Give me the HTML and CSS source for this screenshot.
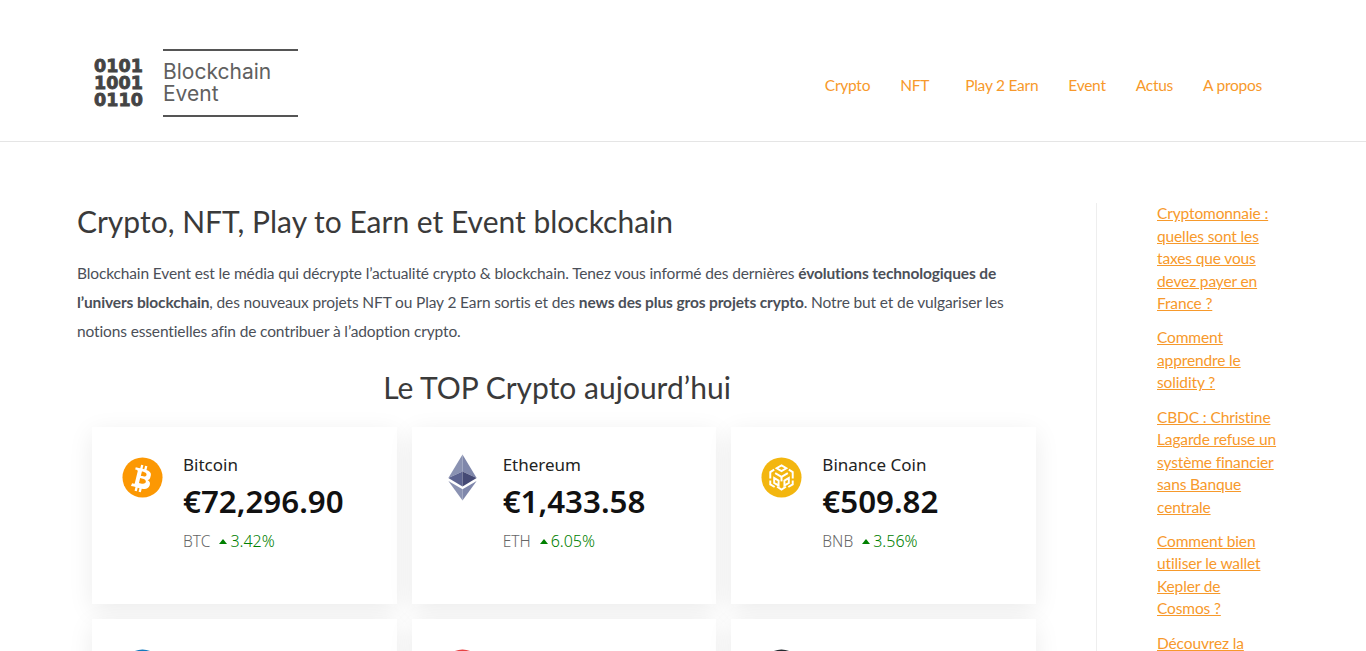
FILE: index.html
```html
<!DOCTYPE html>
<html lang="fr">
<head>
<meta charset="utf-8">
<title>Blockchain Event</title>
<link rel="stylesheet" href="styles.css">
</head>
<body>
<header class="site-header">
  <a class="logo" href="#">
    <span class="logo-bits">0101<br>1001<br>0110</span>
    <span class="logo-name">Blockchain<br>Event</span>
  </a>
  <nav class="nav">
    <a href="#">Crypto</a>
    <a href="#" class="nav-nft">NFT</a>
    <a href="#">Play 2 Earn</a>
    <a href="#">Event</a>
    <a href="#">Actus</a>
    <a href="#">A propos</a>
  </nav>
</header>
<div class="page">
  <main class="main">
    <h1>Crypto, NFT, Play to Earn et Event blockchain</h1>
    <p class="intro">Blockchain Event est le média qui décrypte l’actualité crypto &amp; blockchain. Tenez vous informé des dernières <b>évolutions technologiques de l’univers blockchain</b>, des nouveaux projets NFT ou Play 2 Earn sortis et des <b>news des plus gros projets crypto</b>. Notre but et de vulgariser les notions essentielles afin de contribuer à l’adoption crypto.</p>
    <h2>Le TOP Crypto aujourd’hui</h2>
    <div class="cards">
      <article class="card">
        <svg class="ic" viewBox="0 0 42 42"><circle cx="21" cy="21" r="20.500" fill="#fc9803"/><path fill="#fff" d="M29.600 18.400c.4-2.700-1.700-4.200-4.500-5.200l.9-3.700-2.300-.6-.9 3.600-1.800-.4.900-3.600-2.300-.6-.9 3.700-1.500-.3-3.100-.8-.6 2.400s1.700.4 1.600.4c.9.200 1.100.8 1 1.300l-1 4.100-2 8.100c-.1.300-.5.700-1.100.6 0 0-1.700-.4-1.700-.4l-1.100 2.600 3 .7 1.600.4-.9 3.800 2.300.6.900-3.700 1.800.5-.9 3.700 2.300.6.900-3.800c3.900.7 6.900.4 8.100-3.100 1-2.800 0-4.500-2.100-5.500 1.500-.4 2.600-1.400 2.900-3.300zm-5.200 7.300c-.7 2.800-5.400 1.300-7 .9l1.200-5c1.500.4 6.500 1.100 5.800 4.100zm.7-7.300c-.6 2.500-4.500 1.200-5.800.9l1.100-4.500c1.300.3 5.400.9 4.700 3.600z"/></svg>
        <div class="info">
          <div class="name">Bitcoin</div>
          <div class="price">€72,296.90</div>
          <div class="meta"><span class="sym">BTC</span><span class="chg"><i class="up"></i>3.42%</span></div>
        </div>
      </article>
      <article class="card">
        <svg class="ic" viewBox="0 0 42 48"><path fill="#8a92b2" d="M21 0 6.500 24 21 17.400z"/><path fill="#7f87ab" d="M21 0v17.400L35.500 24z"/><path fill="#5c6390" d="M6.500 24 21 32.600V17.400z"/><path fill="#454a75" d="M21 17.400v15.200L35.500 24z"/><path fill="#8a92b2" d="M6.500 27 21 47V35.500z"/><path fill="#7f87ab" d="M21 35.500V47l14.500-20z"/></svg>
        <div class="info">
          <div class="name">Ethereum</div>
          <div class="price">€1,433.58</div>
          <div class="meta"><span class="sym">ETH</span><span class="chg"><i class="up"></i>6.05%</span></div>
        </div>
      </article>
      <article class="card">
        <svg class="ic" viewBox="0 0 42 42"><circle cx="21" cy="21" r="20.500" fill="#f3b60f"/><g fill="none" stroke="#fff" stroke-width="2"><path d="M21 8.500 26 11.500 21 14.500 16 11.500z"/><path d="M13.500 13 9.500 15.500V22M28.500 13 32.500 15.500V22"/><path d="M14.500 16.500 21 20.300 27.500 16.500"/><path d="M21 20V25"/><path d="M13.500 21.500V26.500L18 29.200V24.200zM28.500 21.500V26.500L24 29.200V24.200z"/><path d="M9.500 24V28L14 30.700M32.500 24V28L28 30.700"/><path d="M16.500 30.500 21 33.300 25.500 30.500"/></g></svg>
        <div class="info">
          <div class="name">Binance Coin</div>
          <div class="price">€509.82</div>
          <div class="meta"><span class="sym">BNB</span><span class="chg"><i class="up"></i>3.56%</span></div>
        </div>
      </article>
      <article class="card">
        <svg class="ic" viewBox="0 0 42 42"><circle cx="21" cy="21" r="20.500" fill="#1279bd"/></svg>
        <div class="info"><div class="name">Litecoin</div></div>
      </article>
      <article class="card">
        <svg class="ic" viewBox="0 0 42 42"><circle cx="21" cy="21" r="20.500" fill="#e84142"/></svg>
        <div class="info"><div class="name">Avalanche</div></div>
      </article>
      <article class="card">
        <svg class="ic" viewBox="0 0 42 42"><circle cx="21" cy="21" r="20.500" fill="#23292f"/></svg>
        <div class="info"><div class="name">XRP</div></div>
      </article>
    </div>
  </main>
  <aside class="side">
    <ul>
      <li><a href="#">Cryptomonnaie : quelles sont les taxes que vous devez payer en France ?</a></li>
      <li><a href="#">Comment apprendre le solidity ?</a></li>
      <li><a href="#">CBDC : Christine Lagarde refuse un système financier sans Banque centrale</a></li>
      <li><a href="#">Comment bien utiliser le wallet Kepler de Cosmos ?</a></li>
      <li><a href="#">Découvrez la</a></li>
    </ul>
  </aside>
</div>
</body>
</html>
```
FILE: styles.css
```css
* { box-sizing: border-box; }
html, body { margin: 0; height: 651px; overflow: hidden; }
body { background: #fff; color: #4b4f58; font-family: "Lato", "Noto Sans", sans-serif; font-size: 15.500px; letter-spacing: -.13px; }
a { color: #f7992b; text-decoration: none; }

.site-header { height: 142px; border-bottom: 1px solid #e5e5e5; display: flex; align-items: flex-start; justify-content: space-between; padding: 49px 104px 0 92px; }
.logo { display: flex; align-items: center; color: #555; letter-spacing: 0; }
.logo-bits { font-family: "DejaVu Sans", sans-serif; font-weight: 700; font-size: 17.500px; line-height: 17px; letter-spacing: .1px; color: #444; width: 71px; padding-left: 2px; -webkit-text-stroke: .8px #444; }
.logo-name { font-family: "Inter", sans-serif; font-weight: 400; font-size: 21px; line-height: 22.500px; width: 135px; height: 68px; padding-top: 9.500px; border-top: 2.500px solid #555; border-bottom: 2.500px solid #555; color: #606060; }

.nav { display: flex; gap: 30px; padding-top: 27px; letter-spacing: -.25px; }
.nav-nft { margin-right: 6px; }

.page { display: flex; padding: 61px 0 0 77px; }
.main { width: 1020px; flex: none; padding-right: 60px; margin-right: -1px; }
h1 { margin: 0; font-weight: 400; font-size: 30px; line-height: 36px; color: #3a3a3a; letter-spacing: 0; }
.intro { margin: 20px 0 0; width: 940px; line-height: 28.800px; }
h2 { margin: 22px 0 0; font-weight: 400; font-size: 30px; line-height: 40px; text-align: center; width: 960px; color: #3a3a3a; letter-spacing: 0; }

.cards { display: grid; grid-template-columns: repeat(3, 1fr); gap: 15px; margin: 20px 0 0 15px; width: 944px; letter-spacing: 0; }
.card { height: 177px; background: #fff; box-shadow: 0 6px 24px rgba(0,0,0,.08); display: flex; padding: 30px 0 0 30px; font-family: "Noto Sans", sans-serif; }
.ic { width: 41px; height: 41px; flex: none; }
.card:nth-child(2) .ic { height: 48px; margin-top: -3px; }
.info { margin-left: 20px; }
.name { font-size: 17px; line-height: 16px; color: #222; }
.price { font-size: 31.300px; font-weight: 600; line-height: 41px; margin-top: 8px; color: #111; }
.meta { font-size: 15.500px; font-weight: 300; line-height: 20px; margin-top: 9px; color: #666; display: flex; }
.sym { margin-right: 9px; }
.chg { color: #008000; display: flex; align-items: center; font-size: 16px; }
.up { width: 0; height: 0; border: 4.500px solid transparent; border-top: 0; border-bottom: 5px solid #008000; margin-right: 3px; }

.side { border-left: 1px solid #eee; padding-left: 60px; width: 184px; flex: none; height: 450px; }
.side ul { list-style: none; margin: -1px 0 0; padding: 0; width: 120px; }
.side li { line-height: 22.500px; margin-bottom: 11.800px; }
.side a { text-decoration: underline; }
```
